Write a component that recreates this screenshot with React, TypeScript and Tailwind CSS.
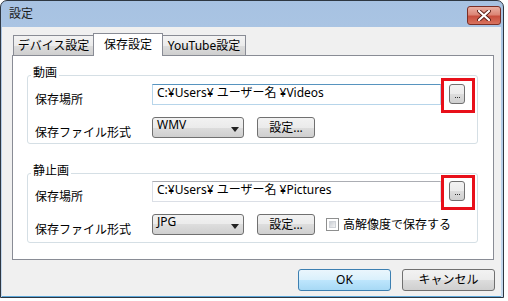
import React from 'react';

const btnFace =
  'border border-[#707070] rounded-[3px] bg-[linear-gradient(to_bottom,#f2f2f2_0%,#ebebeb_50%,#dddddd_50%,#cfcfcf_100%)]';

function BrowseRow({ path, hover }: { path: string; hover?: boolean }) {
  return (
    <div className="flex items-start h-[21px]">
      <div className="w-[117px] mt-[8px] leading-[16px]">保存場所</div>
      <div
        className={`w-[289px] h-[21px] border flex items-start pl-[4px] pt-[1px] leading-[14px] bg-white ${
          hover ? 'border-[#b7d5ea] border-t-[#5794bf]' : 'border-[#dbdfe6] border-t-[#abadb3]'
        }`}
      >
        {path}
      </div>
      <div className="relative ml-[8px]">
        <div className={`w-[16px] h-[20px] ${btnFace} flex items-end justify-center gap-[1px] pb-[5px]`}>
          <span className="w-[1px] h-[1px] bg-[#333]" />
          <span className="w-[1px] h-[1px] bg-[#333]" />
          <span className="w-[1px] h-[1px] bg-[#333]" />
        </div>
        {/* annotation box */}
        <div className="absolute left-[-8px] top-[-6px] w-[34px] h-[35px] border-[3px] border-[#e8101a]" />
      </div>
    </div>
  );
}

function FormatRow({ value, hiRes }: { value: string; hiRes?: boolean }) {
  return (
    <div className="flex items-start h-[21px] mt-[12px]">
      <div className="w-[117px] mt-[8px] leading-[16px]">保存ファイル形式</div>
      <div className={`w-[92px] h-[21px] ${btnFace} flex items-start justify-between pl-[4px] pr-[4px]`}>
        <span className="leading-[14px]">{value}</span>
        <svg width="8" height="5" viewBox="0 0 8 5" className="self-center mt-[3px]">
          <path d="M0 0 H8 L4 5 Z" fill="#222" />
        </svg>
      </div>
      <div className={`ml-[13px] w-[58px] h-[21px] ${btnFace} flex items-center justify-center leading-[16px]`}>
        設定...
      </div>
      {hiRes && (
        <div className="ml-[11px] h-[21px] flex items-center gap-[4px]">
          <div className="w-[13px] h-[13px] border border-[#8e8f8f] bg-white p-[2px]">
            <div className="w-full h-full bg-linear-to-br from-[#cbcfd5] to-[#f4f4f4] border border-[#d0d3d8]" />
          </div>
          <span className="leading-[16px]">高解像度で保存する</span>
        </div>
      )}
    </div>
  );
}

function Group({ title, children, className = '' }: { title: string; children: React.ReactNode; className?: string }) {
  return (
    <div className={`relative border border-[#d5dfe5] rounded-[3px] pl-[7px] ${className}`}>
      <div className="absolute left-[3px] top-[-11px] px-[2px] bg-white leading-[16px]">{title}</div>
      {children}
    </div>
  );
}

export default function App() {
  return (
    <div className="w-[508px] h-[301px] bg-white text-[12px] text-black font-[family-name:Noto_Sans,Noto_Sans_CJK_JP,sans-serif]">
      <div className="w-[504px] h-[298px] border border-[#2e3742] rounded-t-[7px] bg-linear-to-b from-[#a7c2e2] to-[#c5d9ee] flex flex-col overflow-hidden">
        {/* title bar */}
        <div className="h-[26px] flex items-start justify-between pl-[8px] pr-[2px]">
          <div className="mt-[5px] leading-[16px] text-[#1b1b1b]">設定</div>
          <div className="mt-[5px] w-[34px] h-[19px] rounded-[3px] border border-[#7a2e25] bg-[linear-gradient(to_bottom,#eab0a3_0%,#dc8676_45%,#c84f3e_55%,#d8735f_100%)] flex items-center justify-center">
            <svg width="14" height="11" viewBox="0 0 14 11">
              <path d="M2 1 L12 10 M12 1 L2 10" stroke="#5b1f18" strokeWidth="4" strokeLinecap="round" />
              <path d="M2 1 L12 10 M12 1 L2 10" stroke="#ffffff" strokeWidth="2.2" strokeLinecap="round" />
            </svg>
          </div>
        </div>

        {/* client area */}
        <div className="flex-1 ml-[1px] mr-[2px] bg-[#f0f0f0] border-b border-[#5ea8da] pl-[10px] pr-[6px] pt-[6px] flex flex-col">
          {/* tabs */}
          <div className="flex items-end h-[22px]">
            <div className="ml-[1px] w-[81px] h-[20px] border border-[#898c95] border-b-0 bg-[linear-gradient(to_bottom,#f3f3f3_0%,#ebebeb_50%,#dddddd_50%,#cfcfcf_100%)] flex items-center justify-center leading-[16px]">
              デバイス設定
            </div>
            <div className="relative z-10 -ml-[1px] -mb-[1px] w-[70px] h-[23px] border border-[#898c95] border-b-0 bg-white flex items-center justify-center leading-[16px]">
              保存設定
            </div>
            <div className="-ml-[1px] w-[84px] h-[20px] border border-[#898c95] border-b-0 bg-[linear-gradient(to_bottom,#f3f3f3_0%,#ebebeb_50%,#dddddd_50%,#cfcfcf_100%)] flex items-center justify-center leading-[16px]">
              YouTube設定
            </div>
          </div>

          {/* panel */}
          <div className="w-[482px] h-[205px] mr-[1px] border border-[#898c95] bg-white pt-[19px] pl-[14px] pr-[15px]">
            <Group title="動画" className="h-[69px] pt-[8px]">
              <BrowseRow path="C:¥Users¥ ユーザー名 ¥Videos" hover />
              <FormatRow value="WMV" />
            </Group>
            <Group title="静止画" className="h-[70px] pt-[7px] mt-[29px]">
              <BrowseRow path="C:¥Users¥ ユーザー名 ¥Pictures" />
              <FormatRow value="JPG" hiRes />
            </Group>
          </div>

          {/* buttons */}
          <div className="flex justify-end gap-[11px] mt-[9px]">
            <div className="w-[93px] h-[22px] rounded-[3px] border border-[#3c7fb1] bg-[linear-gradient(to_bottom,#eaf6fd_0%,#d9f0fc_50%,#bee6fd_50%,#a7d9f5_100%)] flex items-center justify-center pb-[1px] leading-[16px]">
              OK
            </div>
            <div className={`w-[93px] h-[22px] ${btnFace} flex items-center justify-center pb-[1px] leading-[16px]`}>
              キャンセル
            </div>
          </div>
        </div>
      </div>
    </div>
  );
}
